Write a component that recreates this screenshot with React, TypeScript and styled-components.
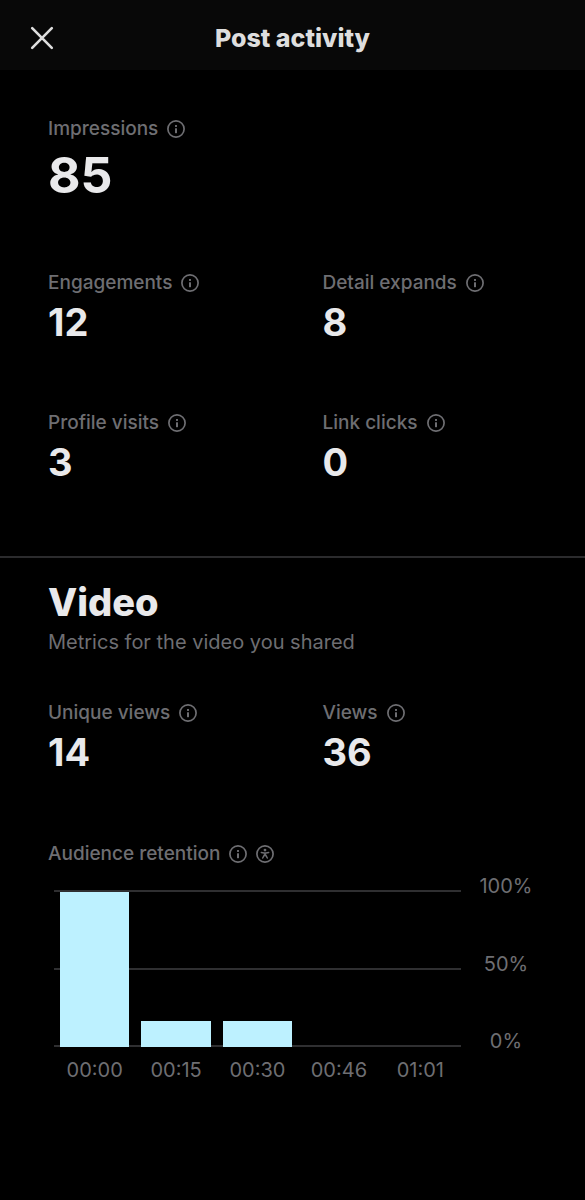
import React from "react";
import styled, { createGlobalStyle } from "styled-components";

const GlobalStyle = createGlobalStyle`
  * {
    box-sizing: border-box;
  }
  body {
    margin: 0;
    background: #000;
    color: #e9e9eb;
    font-family: Inter, "Liberation Sans", sans-serif;
  }
`;

const Page = styled.div`
  min-height: 100vh;
  padding-bottom: 40px;
`;

const Header = styled.header`
  display: grid;
  grid-template-columns: 84px 1fr 84px;
  align-items: center;
  height: 70px;
  padding-top: 6px;
  background: #080808;
`;

const IconButton = styled.button`
  display: flex;
  padding: 0;
  border: 0;
  background: none;
  color: inherit;
  cursor: pointer;
`;

const CloseButton = styled(IconButton)`
  justify-self: center;
  color: #dedede;
`;

const Title = styled.h1`
  margin: 0;
  font-size: 25px;
  line-height: 32px;
  font-weight: 800;
  text-align: center;
  color: #dedede;
`;

const Section = styled.section<{ $top: number }>`
  padding: ${(p) => p.$top}px 48px 0;
`;

const Grid = styled.dl`
  display: grid;
  grid-template-columns: 1fr 1fr;
  gap: 65px 60px;
  margin: 0;
`;

const MetricCell = styled.div<{ $wide?: boolean }>`
  display: flex;
  flex-direction: column;
  gap: 3px;
  grid-column: ${(p) => (p.$wide ? "1 / -1" : "auto")};
`;

const Label = styled.dt`
  display: flex;
  align-items: center;
  gap: 9px;
  font-size: 19px;
  line-height: 28px;
  font-weight: 500;
  white-space: nowrap;
  color: #6e6e72;
`;

const Value = styled.dd<{ $large?: boolean }>`
  margin: 0;
  font-size: ${(p) => (p.$large ? 50 : 38)}px;
  line-height: ${(p) => (p.$large ? 58 : 44)}px;
  font-weight: 700;
`;

const Divider = styled.hr`
  height: 2px;
  margin: 72px 0 0;
  border: 0;
  background: #2b2b2d;
`;

const Heading = styled.h2`
  margin: 0;
  font-size: 38px;
  line-height: 48px;
  font-weight: 800;
`;

const Subtitle = styled.p`
  margin: 2px 0 43px;
  font-size: 20px;
  line-height: 28px;
  color: #6e6e72;
`;

const RetentionTitle = styled(Label).attrs({ as: "h3" })`
  margin: 66px 0 22px;
`;

const Chart = styled.div`
  display: grid;
  grid-template-columns: 1fr 76px;
  padding: 0 0 0 6px;
  font-size: 20px;
  line-height: 28px;
  color: #6e6e72;
`;

const Plot = styled.div`
  display: grid;
  grid-template-columns: repeat(5, 1fr);
  height: 157px;
  background:
    linear-gradient(#2f2f31, #2f2f31) top / 100% 2px no-repeat,
    linear-gradient(#2f2f31, #2f2f31) center / 100% 2px no-repeat,
    linear-gradient(#2f2f31, #2f2f31) bottom / 100% 2px no-repeat;
`;

const BarSlot = styled.div`
  display: flex;
  align-items: flex-end;
  padding: 2px 6px 0;
`;

const Bar = styled.div`
  width: 100%;
  background: #bdf1ff;
`;

const Scale = styled.div`
  display: flex;
  flex-direction: column;
  justify-content: space-between;
  align-items: center;
  margin: -18px 0 -8px;
  padding-left: 14px;
`;

const Times = styled.div`
  display: grid;
  grid-template-columns: repeat(5, 1fr);
  padding-top: 9px;
  text-align: center;
`;

const InfoIcon = () => (
  <svg width="18" height="18" viewBox="0 0 18 18" fill="none" aria-hidden="true">
    <circle cx="9" cy="9" r="8.1" stroke="currentColor" strokeWidth="1.7" />
    <rect x="8" y="4.9" width="2" height="2" rx=".4" fill="currentColor" />
    <rect x="8" y="8.2" width="2" height="5" rx=".4" fill="currentColor" />
  </svg>
);

const AccessibilityIcon = () => (
  <svg width="18" height="18" viewBox="0 0 18 18" fill="none" aria-hidden="true">
    <circle cx="9" cy="9" r="8.1" stroke="currentColor" strokeWidth="1.7" />
    <circle cx="9" cy="5.1" r="1.4" fill="currentColor" />
    <path
      d="M5.3 7.5 8 8.1h2l2.7-.6M9 8.2v2.2M8.4 9.8 6.7 13M9.6 9.8l1.7 3.2"
      stroke="currentColor"
      strokeWidth="1.5"
      strokeLinecap="round"
      strokeLinejoin="round"
    />
  </svg>
);

const InfoButton = ({ about }: { about: string }) => (
  <IconButton type="button" aria-label={`About ${about}`}>
    <InfoIcon />
  </IconButton>
);

type MetricProps = { label: string; value: number; large?: boolean };

const Metric = ({ label, value, large }: MetricProps) => (
  <MetricCell $wide={large}>
    <Label>
      {label}
      <InfoButton about={label} />
    </Label>
    <Value $large={large}>{value}</Value>
  </MetricCell>
);

const retention = [
  { time: "00:00", percent: 100 },
  { time: "00:15", percent: 17 },
  { time: "00:30", percent: 17 },
  { time: "00:46", percent: 0 },
  { time: "01:01", percent: 0 },
];

export default function App() {
  return (
    <Page>
      <GlobalStyle />
      <Header>
        <CloseButton type="button" aria-label="Close">
          <svg width="24" height="24" viewBox="0 0 24 24" fill="none" aria-hidden="true">
            <path
              d="M2.2 2.2l19.6 19.6M21.8 2.2L2.2 21.8"
              stroke="currentColor"
              strokeWidth="2.6"
              strokeLinecap="round"
            />
          </svg>
        </CloseButton>
        <Title>Post activity</Title>
      </Header>
      <main>
        <Section $top={45}>
          <Grid>
            <Metric label="Impressions" value={85} large />
            <Metric label="Engagements" value={12} />
            <Metric label="Detail expands" value={8} />
            <Metric label="Profile visits" value={3} />
            <Metric label="Link clicks" value={0} />
          </Grid>
        </Section>
        <Divider />
        <Section $top={20}>
          <Heading>Video</Heading>
          <Subtitle>Metrics for the video you shared</Subtitle>
          <Grid>
            <Metric label="Unique views" value={14} />
            <Metric label="Views" value={36} />
          </Grid>
          <RetentionTitle>
            Audience retention
            <InfoButton about="Audience retention" />
            <IconButton type="button" aria-label="Accessible chart">
              <AccessibilityIcon />
            </IconButton>
          </RetentionTitle>
          <Chart>
            <Plot>
              {retention.map(({ time, percent }) => (
                <BarSlot key={time}>
                  <Bar style={{ height: `${percent}%` }} />
                </BarSlot>
              ))}
            </Plot>
            <Scale>
              <span>100%</span>
              <span>50%</span>
              <span>0%</span>
            </Scale>
            <Times>
              {retention.map(({ time }) => (
                <span key={time}>{time}</span>
              ))}
            </Times>
          </Chart>
        </Section>
      </main>
    </Page>
  );
}
